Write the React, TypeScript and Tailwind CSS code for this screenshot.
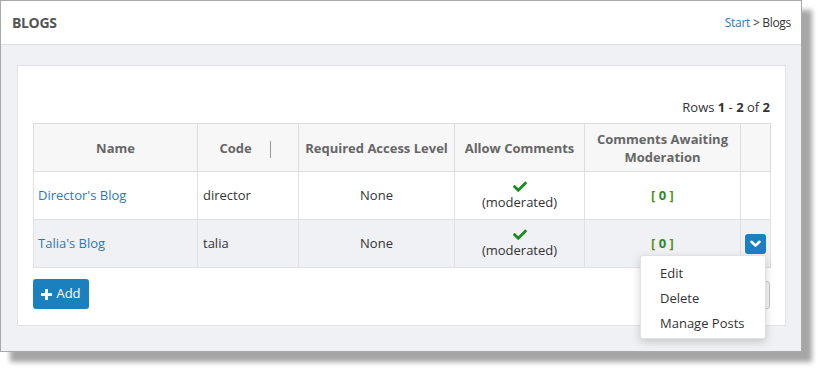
import React from 'react';

const font = { fontFamily: '"Open Sans", "Liberation Sans", sans-serif' };

interface BlogRow {
  id: string;
  name: string;
  code: string;
  access: string;
  pending: number;
}

const rows: BlogRow[] = [
  { id: 'director', name: "Director's Blog", code: 'director', access: 'None', pending: 0 },
  { id: 'talia', name: "Talia's Blog", code: 'talia', access: 'None', pending: 0 },
];

function Check() {
  return (
    <svg width="14" height="11" viewBox="0 0 512 400" className="mx-auto block">
      <path
        fill="#1c8a1c"
        d="M173.9 389.8L7.5 223.4c-10-10-10-26.2 0-36.2l36.2-36.2c10-10 26.2-10 36.2 0L192 263.1 432.1 23c10-10 26.2-10 36.2 0l36.2 36.2c10 10 10 26.2 0 36.2L210.1 389.8c-10 10-26.2 10-36.2 0z"
      />
    </svg>
  );
}

function Chevron() {
  return (
    <svg width="11" height="8" viewBox="0 0 11 8">
      <path d="M1.5 1.8 L5.5 5.6 L9.5 1.8" fill="none" stroke="#fff" strokeWidth="2.6" strokeLinecap="round" strokeLinejoin="round" />
    </svg>
  );
}

export default function App() {
  return (
    <div className="w-[826px] h-[376px] bg-white text-[13px] text-[#333]" style={font}>
      <div className="w-[802px] h-[352px] border border-[#a9a9a9] bg-[#f0f1f5] shadow-[10px_10px_5px_#a6a6a6] flex flex-col">
        {/* page header */}
        <header className="h-[44px] shrink-0 bg-white border-b border-[#dedede] flex items-center justify-between pl-[11px] pr-[10px]">
          <h1 className="text-[14px] font-bold text-[#555] tracking-tight">BLOGS</h1>
          <div className="text-[12px] text-[#333] tracking-tight">
            <a className="text-[#2a7ab8]">Start</a> &gt; Blogs
          </div>
        </header>

        <div className="pt-[20px] pl-[16px] pr-[15px]">
          <section className="relative bg-white border border-[#e3e3e5] px-[15px] pt-[32px] pb-[16px]">
            <div className="h-[20px] mb-[5px] flex items-center justify-end text-[13px] text-[#333]">
              Rows&nbsp;<b>1</b>&nbsp;-&nbsp;<b>2</b>&nbsp;of&nbsp;<b>2</b>
            </div>

            <table className="w-[737px] table-fixed border-collapse">
              <colgroup>
                <col className="w-[164px]" />
                <col className="w-[101px]" />
                <col className="w-[156px]" />
                <col className="w-[130px]" />
                <col className="w-[156px]" />
                <col className="w-[30px]" />
              </colgroup>
              <thead>
                <tr className="h-[48px] bg-[#f7f7f7] text-[#666] font-bold text-[13px] leading-[18px]">
                  <th className="border border-[#dcdcdc] font-bold">Name</th>
                  <th className="relative border border-[#dcdcdc] font-bold pr-[25px]">
                    Code
                    <span className="absolute left-[72px] top-[17px] h-[17px] w-px bg-[#999]" />
                  </th>
                  <th className="border border-[#dcdcdc] font-bold">Required Access Level</th>
                  <th className="border border-[#dcdcdc] font-bold">Allow Comments</th>
                  <th className="border border-[#dcdcdc] font-bold px-2">Comments Awaiting Moderation</th>
                  <th className="border border-[#dcdcdc]" />
                </tr>
              </thead>
              <tbody>
                {rows.map((r, i) => (
                  <tr key={r.id} className={`h-[48px] ${i % 2 === 1 ? 'bg-[#f0f1f5]' : 'bg-white'}`}>
                    <td className="border border-[#e0e0e0] pl-[4px]">
                      <a className="text-[#2a7ab8]">{r.name}</a>
                    </td>
                    <td className="border border-[#e0e0e0] pl-[5px]">{r.code}</td>
                    <td className="border border-[#e0e0e0] text-center">{r.access}</td>
                    <td className="border border-[#e0e0e0] text-center leading-[18px]">
                      <div>
                        <Check />
                      </div>
                      <div className="pt-[1px]">(moderated)</div>
                    </td>
                    <td className="border border-[#e0e0e0] text-center font-bold text-[#2b8a2b]">
                      <span className="text-[#5c8e1e]">[</span> {r.pending} <span className="text-[#5c8e1e]">]</span>
                    </td>
                    <td className="border border-[#e0e0e0] text-center">
                      {i === 1 && (
                        <button className="mx-auto flex h-[20px] w-[21px] items-center justify-center rounded-[3px] bg-[#1d7fc1]">
                          <Chevron />
                        </button>
                      )}
                    </td>
                  </tr>
                ))}
              </tbody>
            </table>

            <div className="mt-[11px] flex items-center justify-between">
              <button className="h-[30px] w-[56px] rounded-[3px] bg-[#1b80be] text-white text-[13px] flex items-center justify-center gap-[4px]">
                <svg width="11" height="11" viewBox="0 0 11 11">
                  <path d="M4 0h3v4h4v3H7v4H4V7H0V4h4z" fill="#fff" />
                </svg>
                Add
              </button>
              <button className="h-[28px] w-[80px] mt-[2px] rounded-[3px] border border-[#c8c8c8] bg-[#f5f5f5] text-[#333]">
                Export
              </button>
            </div>

            {/* row action menu */}
            <ul className="absolute left-[622px] top-[189px] w-[126px] h-[84px] bg-white border border-[#e2e2e2] rounded-[3px] shadow-[0_3px_8px_rgba(0,0,0,0.18)] pt-[5px] pl-[19px] text-[13px] text-[#333] leading-[25px]">
              <li>Edit</li>
              <li>Delete</li>
              <li>Manage Posts</li>
            </ul>
          </section>
        </div>
      </div>
    </div>
  );
}
